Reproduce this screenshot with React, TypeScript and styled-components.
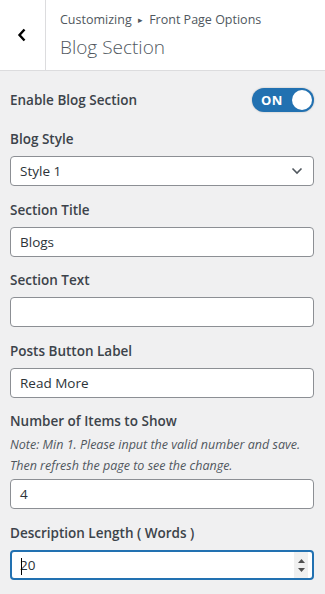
import styled, { createGlobalStyle } from 'styled-components'

const GlobalStyle = createGlobalStyle`
  html, body {
    margin: 0;
    padding: 0;
    background: #f0f0f1;
  }
  body {
    font-family: 'Open Sans', 'Noto Sans', sans-serif;
    color: #3c434a;
  }
  * { box-sizing: border-box; }
`

type Field = {
  label: string
  value: string
  note?: string
  kind?: 'text' | 'select' | 'number'
  focused?: boolean
}

const fields: Field[] = [
  { label: 'Blog Style', value: 'Style 1', kind: 'select' },
  { label: 'Section Title', value: 'Blogs' },
  { label: 'Section Text', value: '' },
  { label: 'Posts Button Label', value: 'Read More' },
  {
    label: 'Number of Items to Show',
    value: '4',
    note: 'Note: Min 1. Please input the valid number and save. Then refresh the page to see the change.',
  },
  { label: 'Description Length ( Words )', value: '20', kind: 'number', focused: true },
]

const App = () => (
  <Panel>
    <GlobalStyle />
    <Header>
      <BackButton>
        <svg width="10" height="14" viewBox="0 0 10 14">
          <path d="M7.5 1.5 L2.5 7 L7.5 12.5" fill="none" stroke="#000" strokeWidth="2.4" />
        </svg>
      </BackButton>
      <HeaderText>
        <Breadcrumb>
          Customizing <Arrow>▸</Arrow> Front Page Options
        </Breadcrumb>
        <PageTitle>Blog Section</PageTitle>
      </HeaderText>
    </Header>
    <Body>
      <ToggleRow>
        <Label>Enable Blog Section</Label>
        <Toggle>
          <ToggleText>ON</ToggleText>
          <Knob />
        </Toggle>
      </ToggleRow>
      {fields.map((f) => (
        <Control key={f.label}>
          <Label>{f.label}</Label>
          {f.note && <Note>{f.note}</Note>}
          <InputBox $focused={f.focused}>
            {f.focused && <Caret />}
            <Value>{f.value}</Value>
            {f.kind === 'select' && (
              <svg width="12" height="8" viewBox="0 0 12 8">
                <path d="M1.5 1.5 L6 6 L10.5 1.5" fill="none" stroke="#50575e" strokeWidth="1.6" />
              </svg>
            )}
            {f.kind === 'number' && (
              <Spinner>
                <svg width="7" height="4" viewBox="0 0 7 4">
                  <path d="M0 4 L3.5 0 L7 4 Z" fill="#505050" />
                </svg>
                <svg width="7" height="4" viewBox="0 0 7 4">
                  <path d="M0 0 L3.5 4 L7 0 Z" fill="#505050" />
                </svg>
              </Spinner>
            )}
          </InputBox>
        </Control>
      ))}
    </Body>
  </Panel>
)

export default App

const Panel = styled.div`
  width: 325px;
  min-height: 594px;
  background: #f0f0f1;
`

const Header = styled.div`
  display: flex;
  height: 71px;
  background: #fff;
  border-bottom: 1px solid #dcdcde;
`

const BackButton = styled.div`
  width: 46px;
  display: flex;
  align-items: center;
  justify-content: center;
  border-right: 1px solid #dcdcde;
  padding-right: 2px;
`

const HeaderText = styled.div`
  padding: 10px 0 0 14px;
  display: flex;
  flex-direction: column;
`

const Breadcrumb = styled.div`
  font-size: 12.5px;
  line-height: 20px;
  color: #50575e;
`

const Arrow = styled.span`
  font-size: 9px;
  margin: 0 3px;
  vertical-align: 1px;
`

const PageTitle = styled.div`
  font-size: 19px;
  font-weight: 300;
  line-height: 30px;
  color: #50575e;
  margin-top: 2px;
`

const Body = styled.div`
  padding: 17px 11px 0 10px;
`

const ToggleRow = styled.div`
  display: flex;
  justify-content: space-between;
  align-items: center;
  height: 23px;
  margin-bottom: 18px;
`

const Label = styled.div`
  font-size: 13.5px;
  font-weight: 600;
  line-height: 20px;
  color: #3c434a;
`

const Toggle = styled.div`
  width: 62px;
  height: 24px;
  border-radius: 12px;
  background: #2271b1;
  box-shadow: 0 0 2px rgba(0, 0, 0, 0.25);
  display: flex;
  align-items: center;
  justify-content: space-between;
  padding: 0 2px 0 9px;
`

const ToggleText = styled.span`
  color: #fff;
  font-size: 13px;
  font-weight: 700;
  letter-spacing: 0.3px;
`

const Knob = styled.span`
  width: 20px;
  height: 20px;
  border-radius: 50%;
  background: #fff;
`

const Control = styled.div`
  margin-bottom: 14px;
  &:nth-child(3),
  &:nth-child(5) {
    margin-bottom: 13px;
  }
  ${Label} {
    margin-bottom: 7px;
  }
`

const Note = styled.div`
  font-size: 12.5px;
  font-style: italic;
  line-height: 21px;
  color: #50575e;
  margin: -4px 0 3px;
`

const InputBox = styled.div<{ $focused?: boolean }>`
  position: relative;
  height: 30px;
  background: #fff;
  border: 1px solid #8c8f94;
  border-radius: 4px;
  display: flex;
  align-items: center;
  padding: 0 10px 0 9px;
  ${({ $focused }) =>
    $focused &&
    `
    border: 2px solid #2271b1;
    padding: 0 10px 0 8px;
  `}
`

const Value = styled.span`
  flex: 1;
  font-size: 13.5px;
  color: #2c3338;
`

const Caret = styled.span`
  position: absolute;
  left: 9px;
  top: 6px;
  width: 1px;
  height: 17px;
  background: #000;
`

const Spinner = styled.div`
  width: 14px;
  height: 26px;
  margin-right: -6px;
  background: #f0f0f0;
  display: flex;
  flex-direction: column;
  align-items: center;
  justify-content: space-around;
  padding: 4px 0;
`
